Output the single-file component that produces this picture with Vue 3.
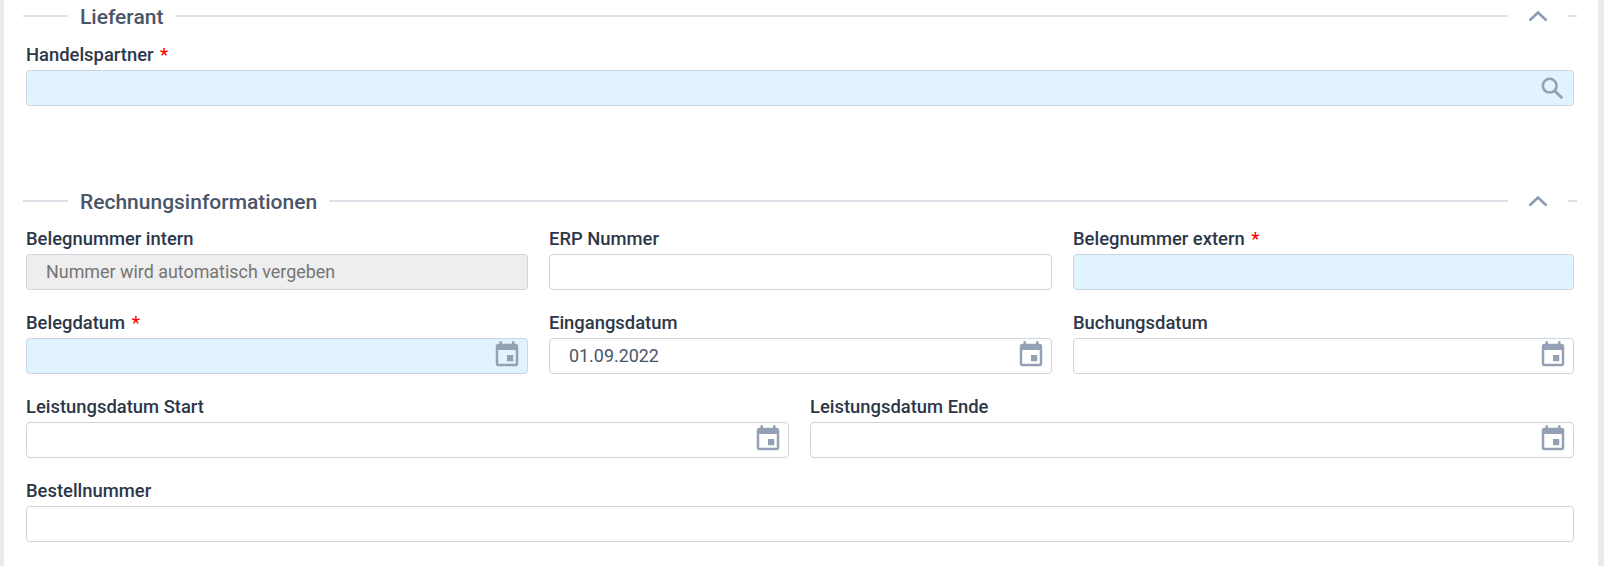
<script setup>
const calendar = 'M19 3h-1V1h-2v2H8V1H6v2H5c-1.1 0-2 .9-2 2v14c0 1.1.9 2 2 2h14c1.1 0 2-.9 2-2V5c0-1.1-.9-2-2-2zm0 16H5V8h14v11zm-2-7h-5v5h5v-5z'
const rows = [
  { cls: 'three', fields: [
    { label: 'Belegnummer intern', value: 'Nummer wird automatisch vergeben', kind: 'disabled' },
    { label: 'ERP Nummer' },
    { label: 'Belegnummer extern', req: true, kind: 'required' },
  ]},
  { cls: 'three', fields: [
    { label: 'Belegdatum', req: true, kind: 'required', date: true },
    { label: 'Eingangsdatum', value: '01.09.2022', date: true },
    { label: 'Buchungsdatum', date: true },
  ]},
  { cls: 'two', fields: [
    { label: 'Leistungsdatum Start', date: true },
    { label: 'Leistungsdatum Ende', date: true },
  ]},
  { cls: 'one', fields: [{ label: 'Bestellnummer' }]},
]
</script>

<template>
  <div class="page">
    <section class="first">
      <header class="head">
        <span class="line short"></span>
        <h2>Lieferant</h2>
        <span class="line grow"></span>
        <svg class="chev" viewBox="0 0 24 24"><path d="M3.5 16.5 12 8.5l8.5 8" fill="none" stroke="currentColor" stroke-width="2.6"/></svg>
        <span class="line tail"></span>
      </header>
      <div class="grid one">
        <div class="field">
          <label>Handelspartner <b>*</b></label>
          <div class="box required">
            <svg class="icon search" viewBox="0 0 24 24"><circle cx="9.5" cy="9.5" r="7.5" fill="none" stroke="currentColor" stroke-width="2.8"/><path d="m15 15 8 8" fill="none" stroke="currentColor" stroke-width="3.2"/></svg>
          </div>
        </div>
      </div>
    </section>

    <section class="second">
      <header class="head">
        <span class="line short"></span>
        <h2>Rechnungsinformationen</h2>
        <span class="line grow"></span>
        <svg class="chev" viewBox="0 0 24 24"><path d="M3.5 16.5 12 8.5l8.5 8" fill="none" stroke="currentColor" stroke-width="2.6"/></svg>
        <span class="line tail"></span>
      </header>
      <div v-for="(row, r) in rows" :key="r" class="grid" :class="row.cls">
        <div v-for="f in row.fields" :key="f.label" class="field">
          <label>{{ f.label }} <b v-if="f.req">*</b></label>
          <div class="box" :class="f.kind">
            <span v-if="f.value" class="value">{{ f.value }}</span>
            <svg v-if="f.date" class="icon cal" viewBox="0 0 24 24"><path :d="calendar" fill="currentColor"/></svg>
          </div>
        </div>
      </div>
    </section>
  </div>
</template>

<style>
html, body { margin: 0; background: #fff; overflow: hidden; }
</style>

<style scoped>
.page {
  box-sizing: border-box;
  width: 1604px;
  height: 566px;
  background: #fff;
  border-left: 4px solid #e9ebf0;
  border-right: 6px solid #e9ebf0;
  padding: 0 24px 0 22px;
  font-family: Roboto, "Liberation Sans", sans-serif;
  overflow: hidden;
}
.first { padding-top: 4px; height: 181px; }
.second { padding-top: 4px; }
.head {
  display: flex;
  align-items: center;
  height: 24px;
  margin: 0 0 10px -3px;
  width: 1554px;
}
.second .head { margin-bottom: 9px; }
h2 {
  margin: 0;
  padding: 2px 12px 0;
  font-size: 21px;
  line-height: 24px;
  font-weight: 500;
  color: #4a5568;
}
.line { height: 2px; background: #dfe2e9; }
.short { width: 45px; }
.grow { flex: 1; }
.tail { width: 9px; margin-left: 18px; }
.chev { width: 24px; height: 24px; margin-left: 18px; color: #8d9bb0; }
.grid { display: grid; column-gap: 21px; margin-bottom: 16px; }
.three { grid-template-columns: 502px 503px 501px; }
.two { grid-template-columns: 763px 764px; }
.one { grid-template-columns: 1fr; }
.field { min-width: 0; }
label {
  display: block;
  box-sizing: border-box;
  height: 32px;
  padding-top: 7px;
  line-height: 20px;
  font-size: 18.4px;
  font-weight: 500;
  color: #2d3748;
}
label b { color: #f00; font-weight: 500; margin-left: 2px; }
.box {
  box-sizing: border-box;
  height: 36px;
  border: 1px solid #cbd5e0;
  border-radius: 4px;
  background: #fff;
  display: flex;
  align-items: center;
  padding: 0 6px 0 19px;
  position: relative;
}
.required { background: #e1f3fe; }
.disabled { background: #eee; }
.value { font-size: 17.9px; color: #4a5568; padding-bottom: 2px; }
.disabled .value { color: #757575; }
.icon { position: absolute; }
.cal { width: 30px; height: 30px; right: 5px; top: 1px; color: #94a0b3; }
.search { width: 22px; height: 22px; right: 10px; top: 6px; color: #94a0b3; }
</style>
